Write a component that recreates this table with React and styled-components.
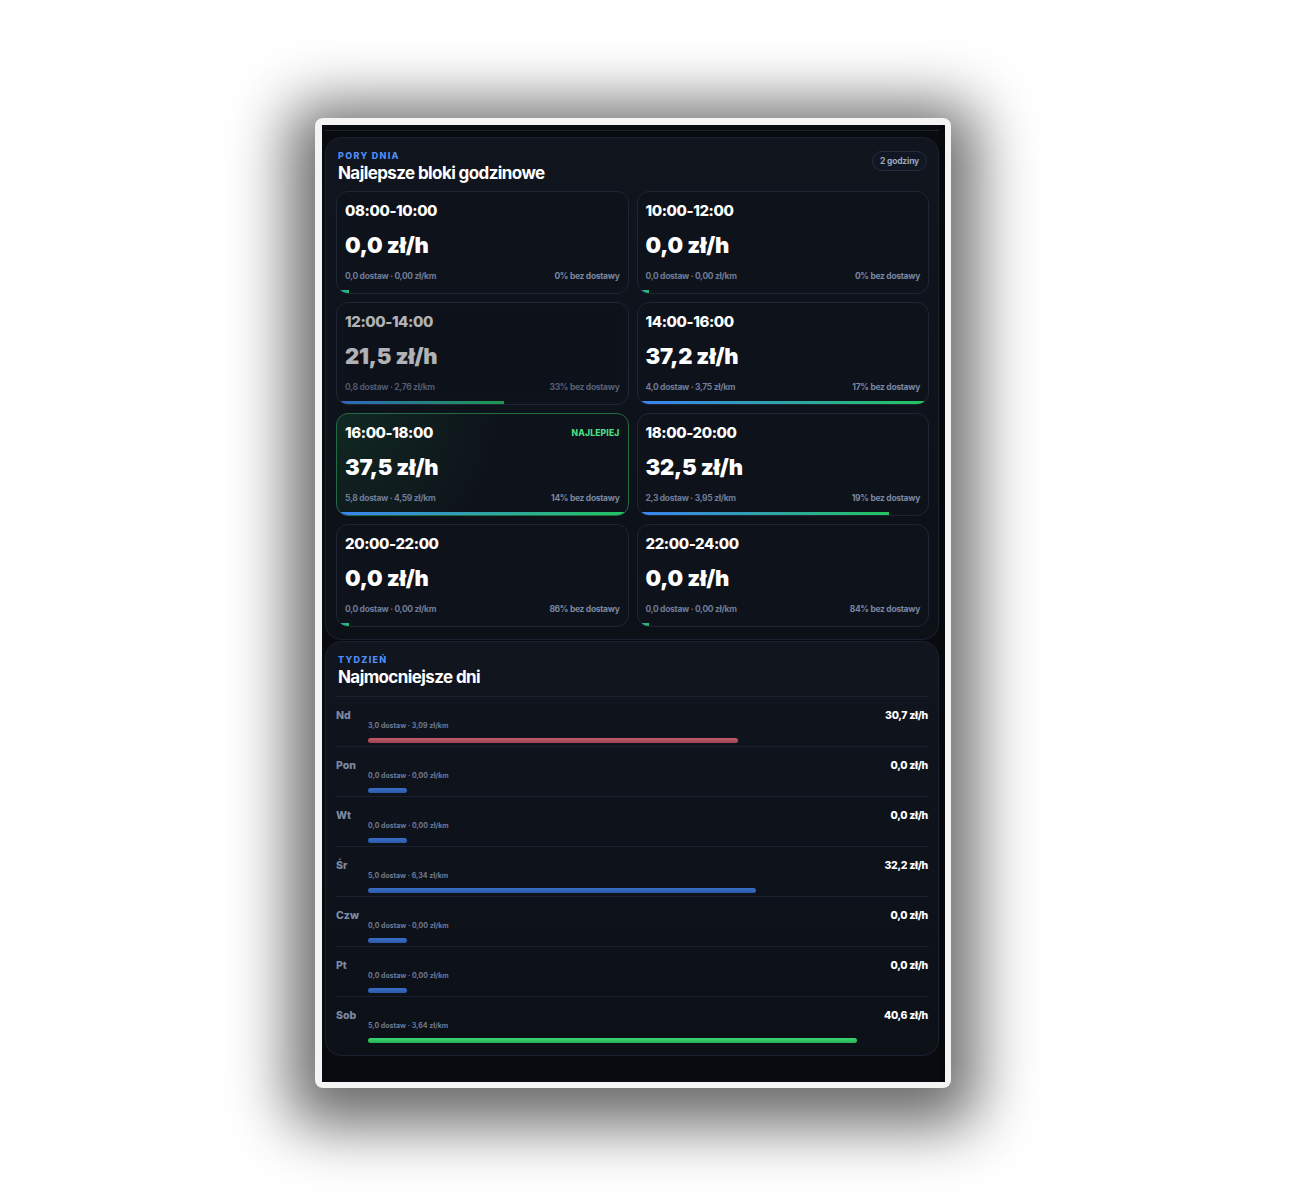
import React from 'react';
import styled, { createGlobalStyle, css } from 'styled-components';

const GlobalStyle = createGlobalStyle`
  html, body {
    margin: 0;
    padding: 0;
    background: #ffffff;
  }
  body {
    font-family: Inter, 'Noto Sans', 'Liberation Sans', sans-serif;
    -webkit-font-smoothing: antialiased;
  }
`;

const Page = styled.div`
  padding: 118px 0 111px 315px;
`;

const Frame = styled.div`
  width: 623px;
  padding: 7px 6px 6px 7px;
  background: #f4f4f4;
  border-radius: 8px;
  box-shadow: 0 12px 60px 26px rgba(0, 0, 0, 0.58);
`;

const Screen = styled.div`
  height: 957px;
  background: #06080c;
  display: flex;
  overflow: hidden;
`;

const Column = styled.div`
  width: 614px;
  padding: 0 1px 0 3px;
  background: #080b10;
  display: flex;
  flex-direction: column;
  gap: 1px;
`;

const ScrolledEdge = styled.div`
  height: 5px;
  border-bottom: 1px solid #1c2230;
  margin-bottom: 5px;
`;

const Section = styled.section`
  border: 1px solid #1b2130;
  border-radius: 16px;
  background: linear-gradient(180deg, #10151e 0%, #0c1017 100%);
  padding: 12px 9px ${(p) => p.$bottom || 11}px 10px;
`;

const Head = styled.div`
  display: flex;
  justify-content: space-between;
  align-items: flex-start;
  padding: 0 2px 0 2px;
`;

const Eyebrow = styled.div`
  font-size: 9px;
  line-height: 12px;
  font-weight: 800;
  letter-spacing: 1.3px;
  color: #4f8ef7;
  text-transform: uppercase;
`;

const Title = styled.h2`
  margin: 0;
  font-size: 17px;
  line-height: 22px;
  font-weight: 700;
  letter-spacing: -0.6px;
  color: #ffffff;
`;

const Pill = styled.div`
  margin-top: 1px;
  height: 18px;
  padding: 0 7px;
  display: flex;
  align-items: center;
  border: 1px solid #252c3b;
  border-radius: 10px;
  background: #111722;
  font-size: 8.5px;
  font-weight: 700;
  letter-spacing: -0.2px;
  color: #9aa5bd;
`;

const Grid = styled.div`
  margin-top: 7px;
  display: grid;
  grid-template-columns: 1fr 1fr;
  gap: 8px;
`;

const Block = styled.div`
  height: 103px;
  box-sizing: border-box;
  border: 1px solid #1f2533;
  border-radius: 12px;
  background: #0e121a;
  overflow: hidden;
  display: flex;
  flex-direction: column;
  ${(p) =>
    p.$best &&
    css`
      border-color: #226b43;
      background: radial-gradient(circle at 0 0, rgba(34, 197, 94, 0.13), rgba(34, 197, 94, 0) 55%), #0e121a;
    `}
`;

const BlockBody = styled.div`
  padding: 10px 8px 0 8px;
  opacity: ${(p) => (p.$dim ? 0.68 : 1)};
`;

const BlockTop = styled.div`
  display: flex;
  justify-content: space-between;
  align-items: center;
`;

const Hours = styled.div`
  font-size: 15px;
  line-height: 18px;
  font-weight: 800;
  letter-spacing: -0.4px;
  color: #ffffff;
`;

const BestTag = styled.div`
  font-size: 8.5px;
  font-weight: 800;
  letter-spacing: 0.2px;
  color: #4ade80;
`;

const Rate = styled.div`
  margin-top: 12px;
  font-size: 22px;
  line-height: 26px;
  font-weight: 900;
  letter-spacing: -0.2px;
  color: #ffffff;
`;

const Foot = styled.div`
  margin-top: 12px;
  display: flex;
  justify-content: space-between;
  font-size: 8.5px;
  line-height: 12px;
  font-weight: 700;
  letter-spacing: -0.3px;
  color: #6f7c98;
`;

const FootRight = styled.span`
  color: #7a87a2;
`;

const BlockBar = styled.div`
  margin-top: auto;
  height: 3px;
  flex-shrink: 0;
  background: linear-gradient(90deg, #3b82f6, #22c55e);
  opacity: ${(p) => (p.$dim ? 0.75 : 1)};
`;

const DayList = styled.div`
  margin-top: 8px;
  border-top: 1px solid #1a2030;
`;

const DayRow = styled.div`
  display: grid;
  grid-template-columns: 32px 1fr 72px;
  padding: 12px 0 3px;
  border-bottom: ${(p) => (p.$last ? 'none' : '1px solid #1a2030')};
`;

const DayName = styled.div`
  font-size: 10.5px;
  line-height: 14px;
  font-weight: 800;
  color: #7d8aa3;
`;

const DayMid = styled.div`
  padding-top: 12px;
`;

const DayMeta = styled.div`
  font-size: 7px;
  line-height: 9px;
  font-weight: 700;
  color: #6d7a95;
`;

const barTones = {
  blue: 'linear-gradient(180deg, #3a6fc6, #2b59a8)',
  red: 'linear-gradient(180deg, #c05a69, #9c4252)',
  green: 'linear-gradient(180deg, #3dd472, #24b257)',
};

const DayBar = styled.div`
  margin-top: 8px;
  height: 5px;
  border-radius: 3px;
  background: ${(p) => barTones[p.$tone]};
`;

const DayRate = styled.div`
  text-align: right;
  padding-right: 1px;
  font-size: 10.5px;
  line-height: 14px;
  font-weight: 800;
  letter-spacing: -0.3px;
  color: #ffffff;
`;

const blocks = [
  { hours: '08:00-10:00', rate: 0, orders: '0,0', perKm: '0,00', idle: 0 },
  { hours: '10:00-12:00', rate: 0, orders: '0,0', perKm: '0,00', idle: 0 },
  { hours: '12:00-14:00', rate: 21.5, orders: '0,8', perKm: '2,76', idle: 33, dim: true },
  { hours: '14:00-16:00', rate: 37.2, orders: '4,0', perKm: '3,75', idle: 17 },
  { hours: '16:00-18:00', rate: 37.5, orders: '5,8', perKm: '4,59', idle: 14, best: true },
  { hours: '18:00-20:00', rate: 32.5, orders: '2,3', perKm: '3,95', idle: 19 },
  { hours: '20:00-22:00', rate: 0, orders: '0,0', perKm: '0,00', idle: 86 },
  { hours: '22:00-24:00', rate: 0, orders: '0,0', perKm: '0,00', idle: 84 },
];

const days = [
  { name: 'Nd', rate: 30.7, orders: '3,0', perKm: '3,09', tone: 'red' },
  { name: 'Pon', rate: 0, orders: '0,0', perKm: '0,00', tone: 'blue' },
  { name: 'Wt', rate: 0, orders: '0,0', perKm: '0,00', tone: 'blue' },
  { name: 'Śr', rate: 32.2, orders: '5,0', perKm: '6,34', tone: 'blue' },
  { name: 'Czw', rate: 0, orders: '0,0', perKm: '0,00', tone: 'blue' },
  { name: 'Pt', rate: 0, orders: '0,0', perKm: '0,00', tone: 'blue' },
  { name: 'Sob', rate: 40.6, orders: '5,0', perKm: '3,64', tone: 'green' },
];

const fmt = (n) => n.toFixed(1).replace('.', ',');

const App = () => {
  const blockMax = Math.max(...blocks.map((b) => b.rate));
  const dayMax = Math.max(...days.map((d) => d.rate));

  return (
    <Page>
      <GlobalStyle />
      <Frame>
        <Screen>
          <Column>
            <ScrolledEdge />
            <Section $bottom={12}>
              <Head>
                <div>
                  <Eyebrow>Pory dnia</Eyebrow>
                  <Title>Najlepsze bloki godzinowe</Title>
                </div>
                <Pill>2 godziny</Pill>
              </Head>
              <Grid>
                {blocks.map((b) => (
                  <Block key={b.hours} $best={b.best}>
                    <BlockBody $dim={b.dim}>
                      <BlockTop>
                        <Hours>{b.hours}</Hours>
                        {b.best && <BestTag>NAJLEPIEJ</BestTag>}
                      </BlockTop>
                      <Rate>{fmt(b.rate)} zł/h</Rate>
                      <Foot>
                        <span>
                          {b.orders} dostaw · {b.perKm} zł/km
                        </span>
                        <FootRight>{b.idle}% bez dostawy</FootRight>
                      </Foot>
                    </BlockBody>
                    <BlockBar
                      $dim={b.dim}
                      style={{ width: `${Math.max(4, (b.rate / blockMax) * 100)}%` }}
                    />
                  </Block>
                ))}
              </Grid>
            </Section>
            <Section $bottom={9}>
              <Head>
                <div>
                  <Eyebrow>Tydzień</Eyebrow>
                  <Title>Najmocniejsze dni</Title>
                </div>
              </Head>
              <DayList>
                {days.map((d, i) => (
                  <DayRow key={d.name} $last={i === days.length - 1}>
                    <DayName>{d.name}</DayName>
                    <DayMid>
                      <DayMeta>
                        {d.orders} dostaw · {d.perKm} zł/km
                      </DayMeta>
                      <DayBar
                        $tone={d.tone}
                        style={{ width: `${Math.max(8, (d.rate / dayMax) * 100)}%` }}
                      />
                    </DayMid>
                    <DayRate>{fmt(d.rate)} zł/h</DayRate>
                  </DayRow>
                ))}
              </DayList>
            </Section>
          </Column>
        </Screen>
      </Frame>
    </Page>
  );
};

export default App;
